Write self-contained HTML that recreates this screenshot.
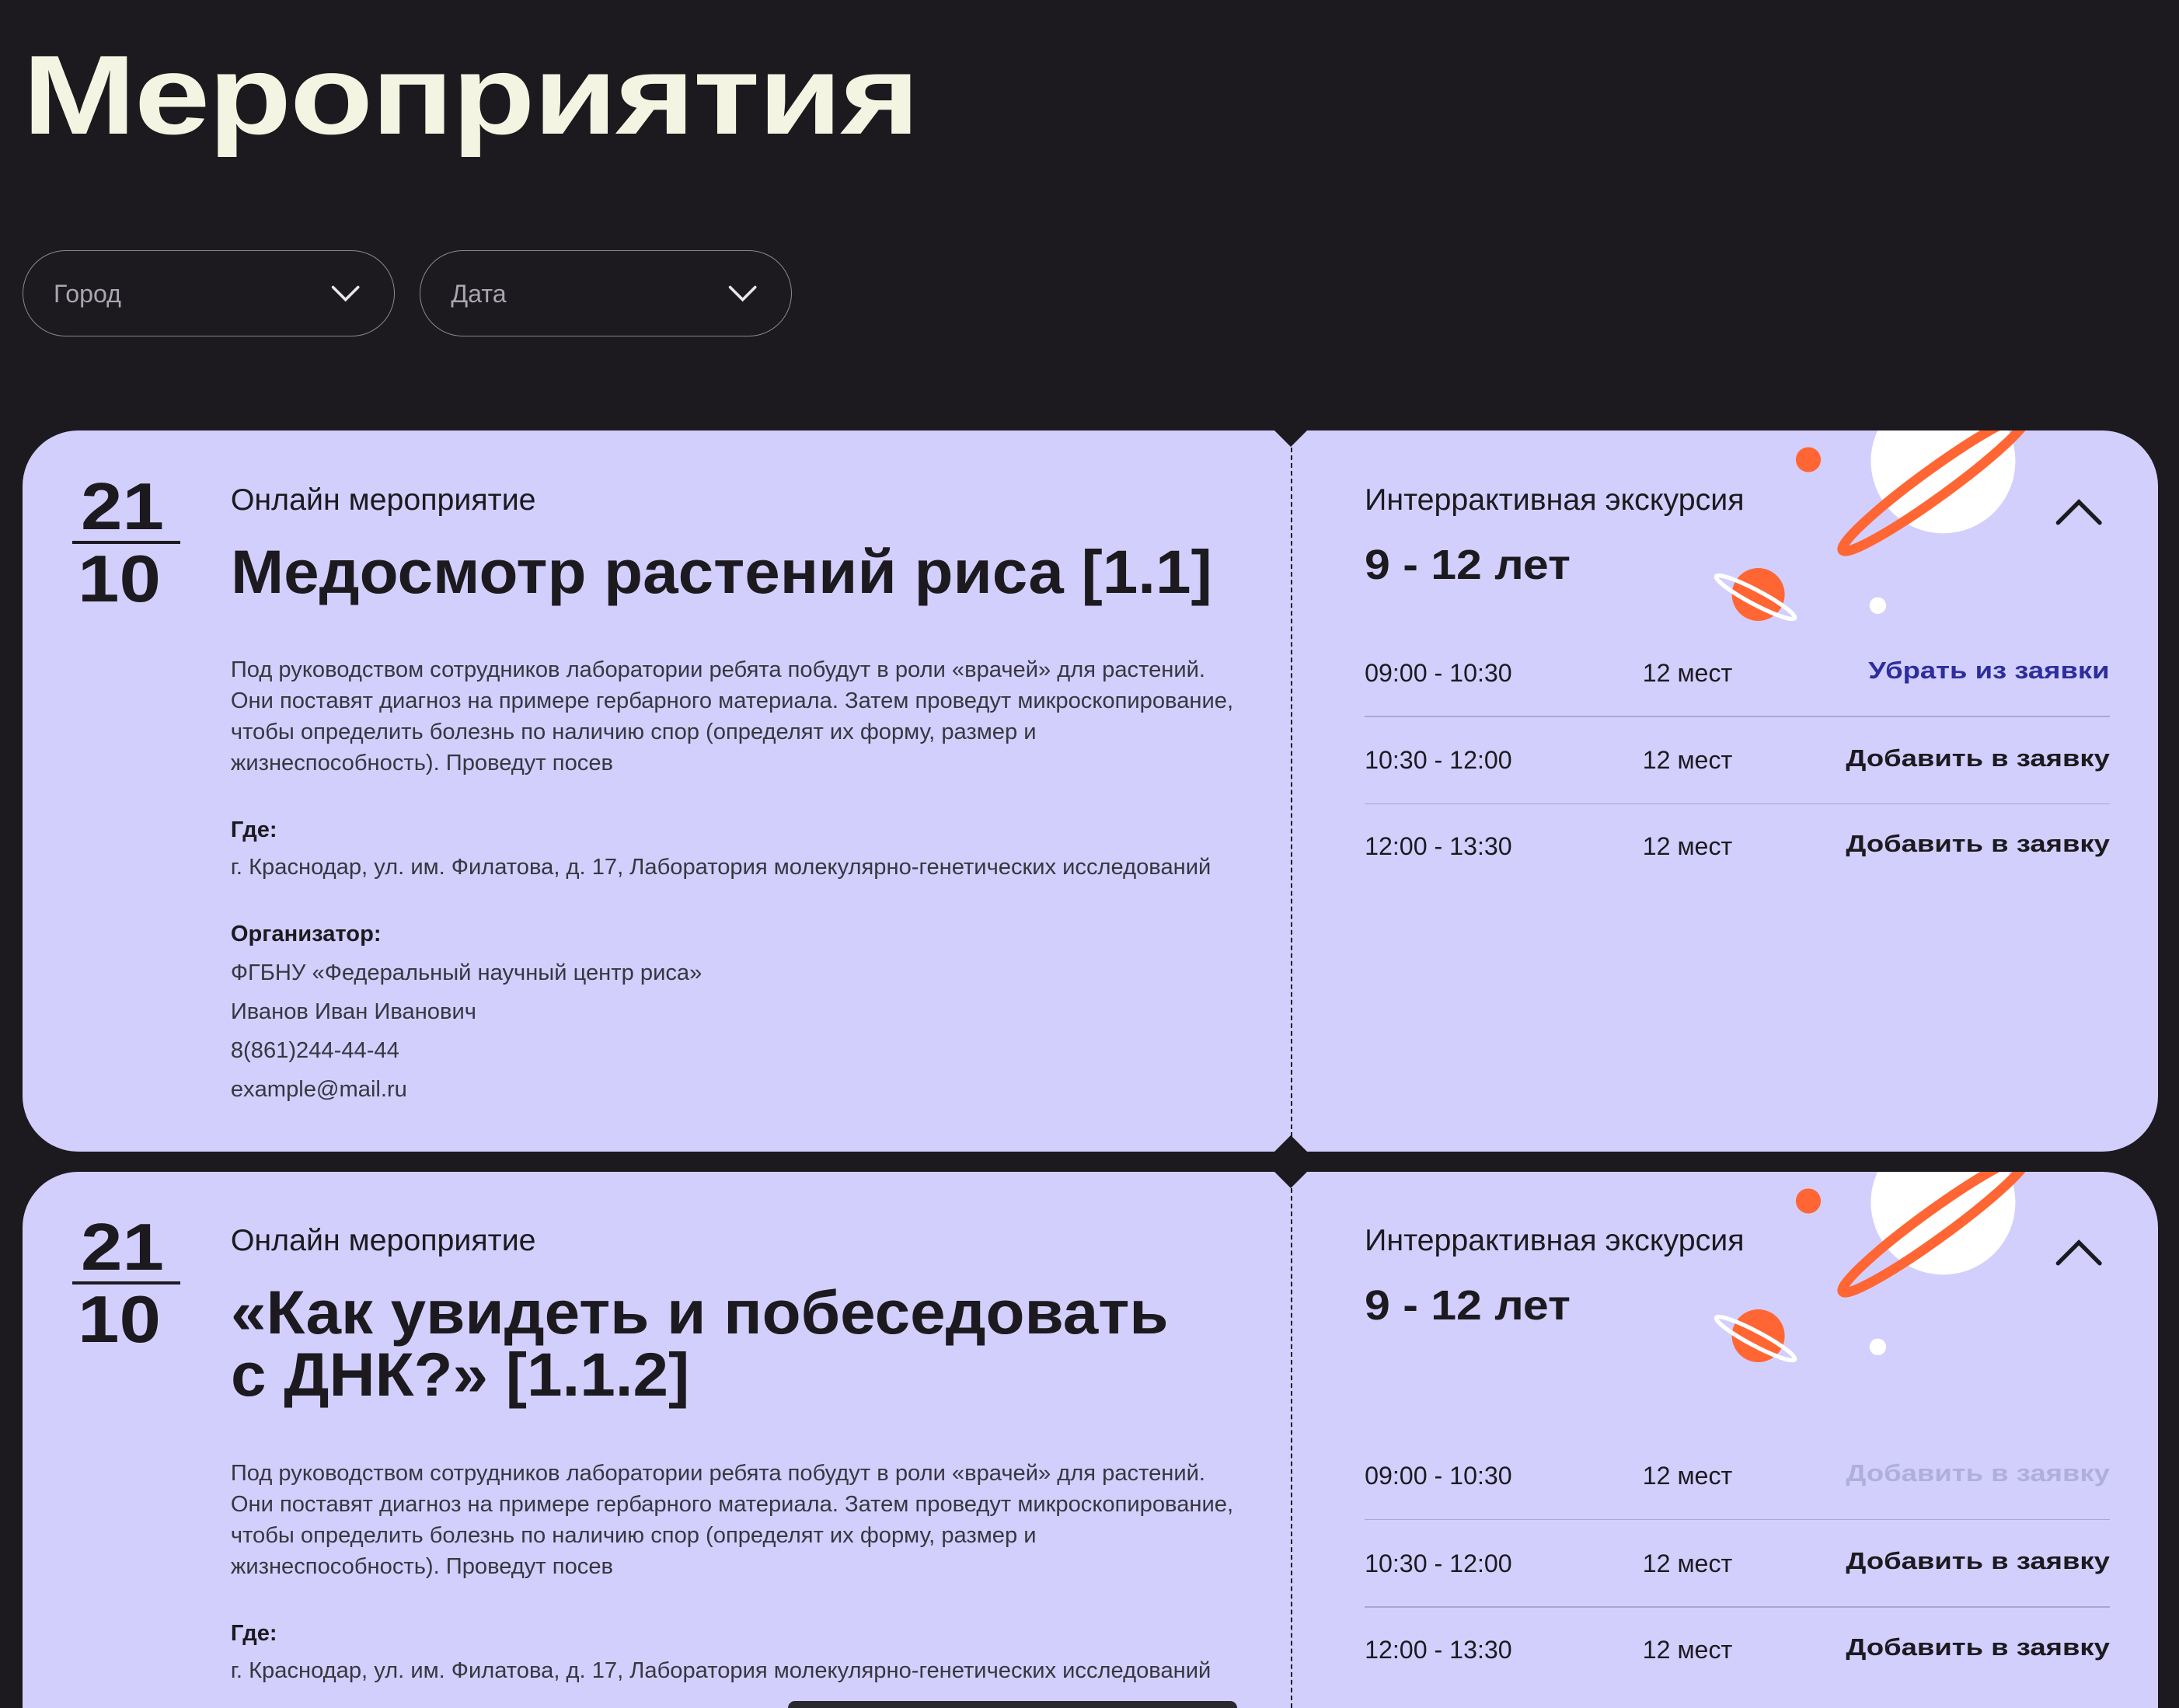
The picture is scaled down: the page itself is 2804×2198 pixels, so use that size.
<!DOCTYPE html>
<html><head><meta charset="utf-8">
<style>
html{zoom:1.78827;overflow:hidden;height:1229px}
body{margin:0;width:1568px;height:1229px;overflow:hidden;background:#1c1a1f;font-family:"Liberation Sans","Noto Sans CJK SC",sans-serif;position:relative;color:#1c1a1f}
.a{position:absolute;white-space:nowrap}
.ext{display:inline-block;font-weight:700;transform-origin:left center}
.sel{position:absolute;top:180px;width:268px;height:62px;border:1px solid #8a8890;border-radius:31px;box-sizing:border-box}
.sel span{position:absolute;left:22px;top:21px;font-size:18px;color:#a9a7ad}
.sel svg{position:absolute;right:24px;top:24px}
.card{position:absolute;left:16px;width:1537px;background:#d2cffd;border-radius:40px}
.notch{position:absolute;width:0;height:0;border-left:12px solid transparent;border-right:12px solid transparent}
.dash{position:absolute;left:929px;width:0;border-left:1.3px dashed #1c1a1f}
.t{font-size:16.3px;color:#38363f;line-height:22.4px}
.row{position:absolute;left:982px;width:536px;height:63px;font-size:18px}
.row .tm{position:absolute;left:0;top:0}
.row .pl{position:absolute;left:200px;top:0}
.row .ac{position:absolute;right:0;top:-1px;font-weight:700;font-size:17px;transform:scaleX(1.2);transform-origin:right center}
.sep{position:absolute;left:982px;width:536px;height:1px;background:#a9a6d6}
</style></head><body>
<div class="a" style="left:16px;top:22px;font-size:81px;color:#f3f4e1;"><span class="ext" style="transform:scaleX(1.21);letter-spacing:-1px">Мероприятия</span></div>

<div class="sel" style="left:16px"><span>Город</span><svg width="22" height="14" viewBox="0 0 22 14"><path d="M2 2 L11 11 L20 2" stroke="#e8e8ea" stroke-width="2" fill="none" stroke-linecap="round"/></svg></div>
<div class="sel" style="left:302px"><span>Дата</span><svg width="22" height="14" viewBox="0 0 22 14"><path d="M2 2 L11 11 L20 2" stroke="#e8e8ea" stroke-width="2" fill="none" stroke-linecap="round"/></svg></div>

<div class="card" style="top:310px;height:519px;overflow:hidden">
<svg style="position:absolute;left:1200px;top:0" width="300" height="150" viewBox="1216 310 300 150">
<circle cx="1301" cy="331" r="9" fill="#ff6633"/>
<ellipse cx="1398" cy="332" rx="52" ry="52" fill="#fff"/>
<ellipse cx="1392" cy="348" rx="82" ry="10" fill="none" stroke="#ff6633" stroke-width="7" transform="rotate(-36 1392 348)"/>
<circle cx="1265" cy="428" r="19" fill="#ff6633"/>
<ellipse cx="1263" cy="430" rx="32" ry="5" fill="none" stroke="#fff" stroke-width="3" transform="rotate(28 1263 430)"/>
<circle cx="1351" cy="436" r="6" fill="#fff"/>
</svg>
</div>
<div class="notch" style="left:917px;top:310px;border-top:12px solid #1c1a1f"></div>
<div class="dash" style="top:322px;height:496px"></div>
<div class="notch" style="left:917px;top:817px;border-bottom:12px solid #1c1a1f"></div>

<div class="a" style="left:58px;top:340px;font-size:48px;line-height:50px"><span class="ext" style="transform:scaleX(1.12)">21</span></div>
<div class="a" style="left:52px;top:389px;width:78px;height:2.5px;background:#1c1a1f"></div>
<div class="a" style="left:56px;top:392px;font-size:48px;line-height:50px"><span class="ext" style="transform:scaleX(1.12)">10</span></div>
<div class="a" style="left:166px;top:347px;font-size:22px">Онлайн мероприятие</div>
<div class="a" style="left:166px;top:388px;font-size:44px;line-height:48px"><span class="ext" style="transform:scaleX(1.04)">Медосмотр растений риса [1.1]</span></div>
<div class="a t" style="left:166px;top:471px">Под руководством сотрудников лаборатории ребята побудут в роли «врачей» для растений.<br>Они поставят диагноз на примере гербарного материала. Затем проведут микроскопирование,<br>чтобы определить болезнь по наличию спор (определят их форму, размер и<br>жизнеспособность). Проведут посев</div>
<div class="a t" style="left:166px;top:586px;font-weight:700;color:#1c1a1f">Где:</div>
<div class="a t" style="left:166px;top:613px">г. Краснодар, ул. им. Филатова, д. 17, Лаборатория молекулярно-генетических исследований</div>
<div class="a t" style="left:166px;top:661px;font-weight:700;color:#1c1a1f">Организатор:</div>
<div class="a t" style="left:166px;top:686px;line-height:28px">ФГБНУ «Федеральный научный центр риса»<br>Иванов Иван Иванович<br>8(861)244-44-44<br>example@mail.ru</div>

<div class="a" style="left:982px;top:347px;font-size:22px">Интеррактивная экскурсия</div>
<div class="a" style="left:982px;top:389px;font-size:30px"><span class="ext" style="transform:scaleX(1.1)">9 - 12 лет</span></div>
<svg class="a" style="left:1478px;top:356px" width="36" height="24"><path d="M3 20 L18 5 L33 20" stroke="#1c1a1f" stroke-width="3" fill="none" stroke-linecap="round"/></svg>
<div class="row" style="top:474px"><span class="tm">09:00 - 10:30</span><span class="pl">12 мест</span><span class="ac" style="color:#2d2d9c">Убрать из заявки</span></div>
<div class="sep" style="top:515px"></div>
<div class="row" style="top:537px"><span class="tm">10:30 - 12:00</span><span class="pl">12 мест</span><span class="ac">Добавить в заявку</span></div>
<div class="sep" style="top:578px"></div>
<div class="row" style="top:599px"><span class="tm">12:00 - 13:30</span><span class="pl">12 мест</span><span class="ac">Добавить в заявку</span></div>

<div class="card" style="top:843px;height:386px;overflow:hidden;border-radius:40px 40px 0 0">
<svg style="position:absolute;left:1200px;top:0" width="300" height="150" viewBox="1216 843 300 150">
<circle cx="1301" cy="864" r="9" fill="#ff6633"/>
<ellipse cx="1398" cy="865" rx="52" ry="52" fill="#fff"/>
<ellipse cx="1392" cy="881" rx="82" ry="10" fill="none" stroke="#ff6633" stroke-width="7" transform="rotate(-36 1392 881)"/>
<circle cx="1265" cy="961" r="19" fill="#ff6633"/>
<ellipse cx="1263" cy="963" rx="32" ry="5" fill="none" stroke="#fff" stroke-width="3" transform="rotate(28 1263 963)"/>
<circle cx="1351" cy="969" r="6" fill="#fff"/>
</svg>
</div>
<div class="notch" style="left:917px;top:843px;border-top:12px solid #1c1a1f"></div>
<div class="dash" style="top:855px;height:374px"></div>

<div class="a" style="left:58px;top:873px;font-size:48px;line-height:50px"><span class="ext" style="transform:scaleX(1.12)">21</span></div>
<div class="a" style="left:52px;top:922px;width:78px;height:2.5px;background:#1c1a1f"></div>
<div class="a" style="left:56px;top:925px;font-size:48px;line-height:50px"><span class="ext" style="transform:scaleX(1.12)">10</span></div>
<div class="a" style="left:166px;top:880px;font-size:22px">Онлайн мероприятие</div>
<div class="a" style="left:166px;top:922px;font-size:44px;line-height:45px"><span class="ext" style="transform:scaleX(1.04)">«Как увидеть и побеседовать<br>с ДНК?» [1.1.2]</span></div>
<div class="a t" style="left:166px;top:1049px">Под руководством сотрудников лаборатории ребята побудут в роли «врачей» для растений.<br>Они поставят диагноз на примере гербарного материала. Затем проведут микроскопирование,<br>чтобы определить болезнь по наличию спор (определят их форму, размер и<br>жизнеспособность). Проведут посев</div>
<div class="a t" style="left:166px;top:1164px;font-weight:700;color:#1c1a1f">Где:</div>
<div class="a t" style="left:166px;top:1191px">г. Краснодар, ул. им. Филатова, д. 17, Лаборатория молекулярно-генетических исследований</div>

<div class="a" style="left:982px;top:880px;font-size:22px">Интеррактивная экскурсия</div>
<div class="a" style="left:982px;top:922px;font-size:30px"><span class="ext" style="transform:scaleX(1.1)">9 - 12 лет</span></div>
<svg class="a" style="left:1478px;top:889px" width="36" height="24"><path d="M3 20 L18 5 L33 20" stroke="#1c1a1f" stroke-width="3" fill="none" stroke-linecap="round"/></svg>
<div class="row" style="top:1052px"><span class="tm">09:00 - 10:30</span><span class="pl">12 мест</span><span class="ac" style="color:#b0aedb">Добавить в заявку</span></div>
<div class="sep" style="top:1093px"></div>
<div class="row" style="top:1115px"><span class="tm">10:30 - 12:00</span><span class="pl">12 мест</span><span class="ac">Добавить в заявку</span></div>
<div class="sep" style="top:1156px"></div>
<div class="row" style="top:1177px"><span class="tm">12:00 - 13:30</span><span class="pl">12 мест</span><span class="ac">Добавить в заявку</span></div>

<div class="a" style="left:567px;top:1224px;width:323px;height:5px;background:#2a282e;border-radius:8px 8px 0 0"></div>
</body></html>
